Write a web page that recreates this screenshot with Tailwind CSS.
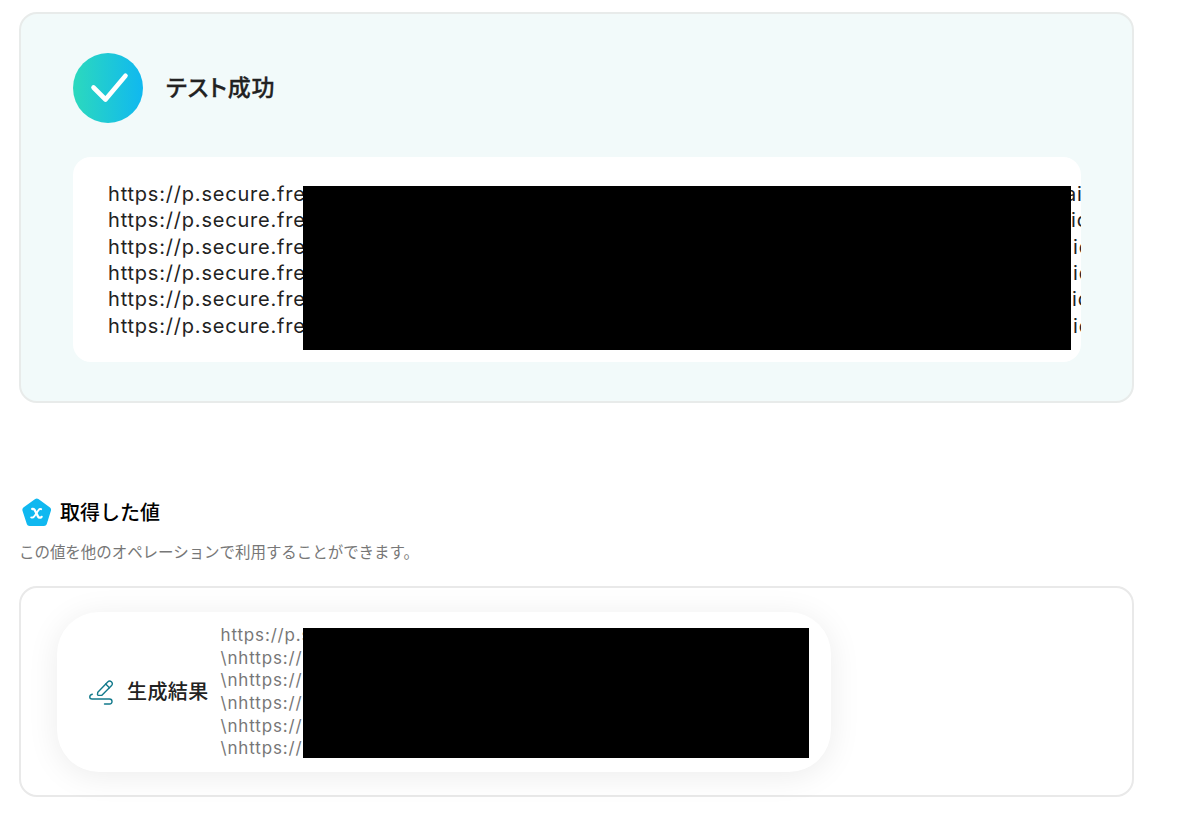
<!DOCTYPE html>
<html lang="ja">
<head>
  <meta charset="UTF-8" />
  <meta name="viewport" content="width=device-width, initial-scale=1.0" />
  <title>テスト成功</title>
  <script src="https://cdn.jsdelivr.net/npm/@tailwindcss/browser@4"></script>
</head>
<body class="bg-white text-[#222] font-[Inter,'Noto_Sans_CJK_JP',sans-serif] h-[814px] overflow-hidden pl-[19px] pt-3">
  <!-- Test result -->
  <section class="w-[1115px] h-[391px] rounded-[18px] border-2 border-[#e8ebea] bg-[#f2fafa] px-[52px] pt-[39px]">
    <div class="flex items-center gap-[23px]">
      <svg class="size-[70px]" viewBox="0 0 70 70" fill="none">
        <defs>
          <linearGradient id="ok" x1="0" y1="35" x2="70" y2="35" gradientUnits="userSpaceOnUse">
            <stop stop-color="#2cd9bd" />
            <stop offset="1" stop-color="#10b8f0" />
          </linearGradient>
        </defs>
        <circle cx="35" cy="35" r="35" fill="url(#ok)" />
        <path d="M20.5 34.5L32.5 46.5L52.5 22.8" stroke="#fff" stroke-width="4.6" stroke-linecap="round" stroke-linejoin="round" />
      </svg>
      <h1 class="text-[23px] leading-[34px] font-medium tracking-[0.035em] [-webkit-text-stroke:0.3px_#222] [font-feature-settings:'palt']">テスト成功</h1>
    </div>

    <div class="relative mt-[34px] h-[205px] w-[1008px] overflow-hidden rounded-[18px] bg-white pl-[35px] pt-[23.8px] text-[20px] leading-[26.4px] tracking-[0.04em] whitespace-nowrap">
      <div class="flex"><span class="w-[957px] shrink-0">https://p.secure.fre</span><span>aid</span></div>
      <div class="flex"><span class="w-[963px] shrink-0">https://p.secure.fre</span><span>id</span></div>
      <div class="flex"><span class="w-[965px] shrink-0">https://p.secure.fre</span><span>id</span></div>
      <div class="flex"><span class="w-[965px] shrink-0">https://p.secure.fre</span><span>id</span></div>
      <div class="flex"><span class="w-[964px] shrink-0">https://p.secure.fre</span><span>id</span></div>
      <div class="flex"><span class="w-[965px] shrink-0">https://p.secure.fre</span><span>id</span></div>
      <div class="absolute left-[230px] top-[29px] h-[164px] w-[768px] bg-black"></div>
    </div>
  </section>

  <!-- Values obtained -->
  <div class="mt-[95px] flex items-center">
    <svg class="-mt-0.5 ml-[3px] h-[29px] w-[30px]" viewBox="0 0 30 29">
      <path d="M13.2 1.1Q14.8 0 16.4 1.1L28 9.6Q29.5 10.8 28.9 12.7L24.7 26.2Q24 28 22 28H7.5Q5.5 28 4.9 26.2L0.5 12.7Q0 10.8 1.4 9.6Z" fill="#10b8f0" />
      <path d="M10.2 11H11.2Q12.2 11 12.7 12L16.1 18.6Q16.6 19.6 17.6 19.6H18.6Q19.4 19.6 19.6 18.8" fill="none" stroke="#fff" stroke-width="2.3" stroke-linecap="round" />
      <path d="M19.2 11.2Q17.6 10.6 16.6 12L12.2 18.4Q11 20 9.2 19.4" fill="none" stroke="#fff" stroke-width="1.8" stroke-linecap="round" />
    </svg>
    <h2 class="ml-2 text-[20px] leading-[30px] font-medium text-black">取得した値</h2>
  </div>
  <p class="mt-[13px] text-[15.5px] leading-[24px] tracking-[-0.05px] text-[#777]">この値を他のオペレーションで利用することができます。</p>

  <section class="mt-[21px] h-[211px] w-[1115px] rounded-[18px] border-2 border-[#e9e9e9] bg-white pl-[36px] pt-[24px]">
    <div class="relative flex h-[160px] w-[774px] items-center rounded-[42px] bg-white pl-[32px] shadow-[0_4px_32px_rgba(0,0,0,0.08)]">
      <svg class="size-[25px]" viewBox="0 0 25 25" fill="none" stroke="#137a8c" stroke-width="1.4" stroke-linecap="round" stroke-linejoin="round">
        <path d="M8.8 12.2L18.7 1.9Q20.5 0.2 22.4 1.8Q24.2 3.8 22.6 5.6L12.9 15.2L9.3 15.4Q8.4 15.3 8.5 14.3Z" />
        <path d="M16.7 4L20.4 7.8" />
        <path d="M3.3 14.2C-0.2 15 0.1 19 3.1 19H20.5C23.8 19 23.9 24 20.5 24H15.5" />
      </svg>
      <span class="ml-[13px] w-[94px] shrink-0 text-[20px] leading-[30px] font-medium tracking-[0.02em]">生成結果</span>
      <div class="-ml-[0.5px] text-[17px] leading-[22.6px] tracking-[0.05em] text-[#777] whitespace-nowrap">
        <div>https://p.s</div>
        <div>\nhttps://</div>
        <div>\nhttps://</div>
        <div>\nhttps://</div>
        <div>\nhttps://</div>
        <div>\nhttps://</div>
      </div>
      <div class="absolute left-[246px] top-[16px] h-[130px] w-[506px] bg-black"></div>
    </div>
  </section>
</body>
</html>
